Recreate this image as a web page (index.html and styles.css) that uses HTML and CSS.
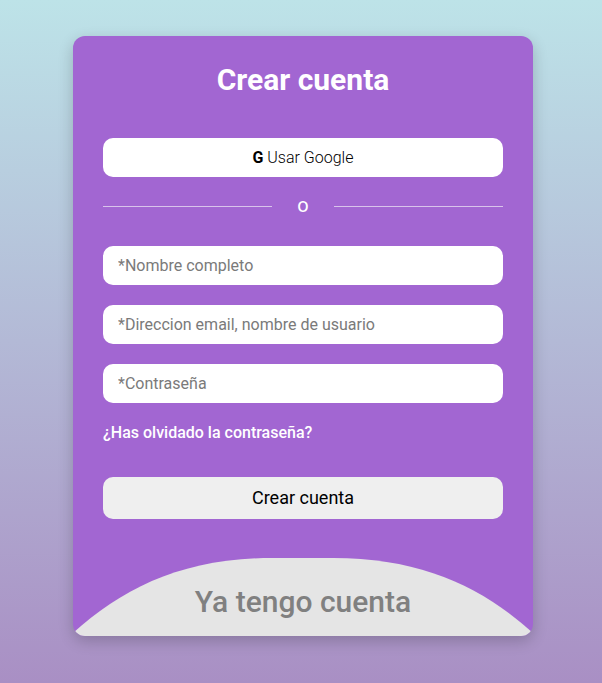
FILE: index.html
```html
<!DOCTYPE html>
<html lang="es">
<head>
    <meta charset="UTF-8">
    <meta name="viewport" content="width=device-width, initial-scale=1.0">
    <title>Crear cuenta</title>
    <link rel="stylesheet" href="styles.css">
</head>
<body>

    <div class="card">
        <form class="signup">
            <h1>Crear cuenta</h1>
            <button type="button" class="google"><b>G</b> Usar Google</button>
            <div class="divider"><span>o</span></div>
            <input type="text" placeholder="*Nombre completo">
            <input type="text" placeholder="*Direccion email, nombre de usuario">
            <input type="password" placeholder="*Contraseña">
            <a href="#" class="forgot">¿Has olvidado la contraseña?</a>
            <button type="button" class="submit">Crear cuenta</button>
        </form>
        <div class="login">Ya tengo cuenta</div>
    </div>

</body>
</html>
```

FILE: styles.css
```css
* {
    box-sizing: border-box;
}

body {
    margin: 0;
    height: 683px;
    display: flex;
    justify-content: center;
    padding: 36px 0 0 4px;
    font-family: Roboto, sans-serif;
    background: linear-gradient(to bottom, #bde3e8, #a98fc4);
}

.card {
    width: 460px;
    height: 600px;
    border-radius: 12px;
    background-color: #a266d2;
    box-shadow: 0 5px 15px rgba(0, 0, 0, 0.2);
    overflow: hidden;
    display: flex;
    flex-direction: column;
    justify-content: space-between;
}

.signup {
    display: flex;
    flex-direction: column;
    padding: 0 30px;
}

h1 {
    margin: 27px 0 41px;
    height: 34px;
    font-size: 30px;
    line-height: 34px;
    font-weight: 700;
    text-align: center;
    color: #fff;
}

button {
    border: none;
    border-radius: 10px;
    font-family: inherit;
    color: #000;
    cursor: pointer;
}

.google {
    height: 39px;
    background-color: #fff;
    font-size: 16px;
    font-weight: 300;
}

.google b {
    font-weight: 700;
}

.divider {
    display: flex;
    align-items: center;
    gap: 25px;
    margin: 19px 0 30px;
    height: 20px;
    font-size: 20px;
    line-height: 20px;
    color: #fff;
}

.divider span {
    padding-bottom: 2px;
}

.divider::before, .divider::after {
    content: "";
    flex: 1;
    height: 1px;
    background-color: #d9c3eb;
}

input {
    height: 39px;
    margin-bottom: 20px;
    padding: 0 15px;
    border: none;
    border-radius: 10px;
    background-color: #fff;
    font-family: inherit;
    font-size: 16px;
}

input::placeholder {
    color: #7a7a7a;
}

.forgot {
    margin: 0 0 34px;
    height: 20px;
    font-size: 16px;
    line-height: 20px;
    font-weight: 500;
    color: #fff;
    text-decoration: none;
}

.submit {
    height: 42px;
    padding-bottom: 3px;
    background-color: #efefef;
    font-size: 18px;
    font-weight: 400;
}

.login {
    height: 78px;
    padding-top: 26px;
    background-color: #e5e5e5;
    clip-path: path("M0 75 C50 30 110 0 200 0 H260 C350 0 410 30 460 75 V78 H0 Z");
    font-size: 30px;
    line-height: 36px;
    font-weight: 500;
    text-align: center;
    color: #808080;
}
```
